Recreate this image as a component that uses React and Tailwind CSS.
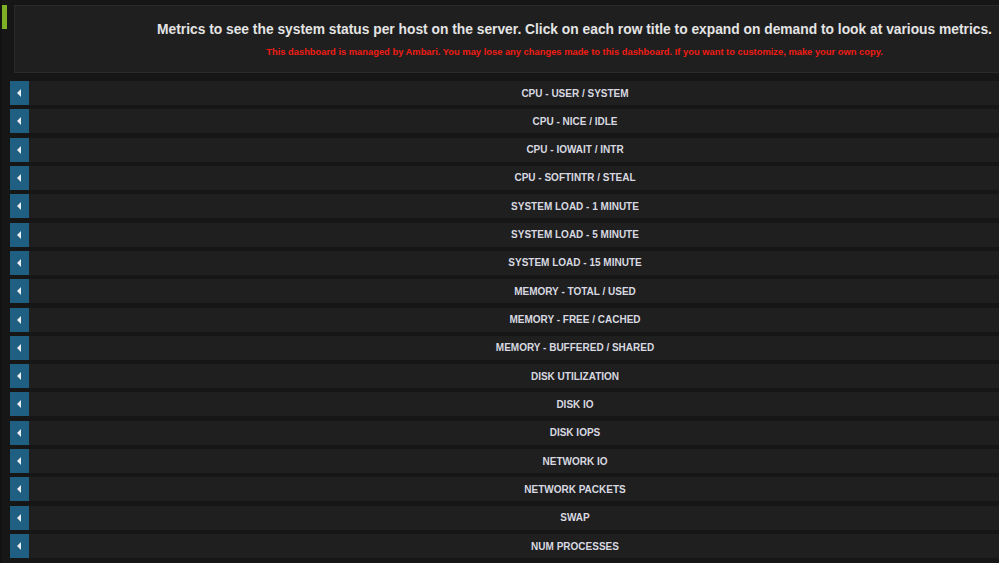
import React from 'react';

const rows = [
  'CPU - USER / SYSTEM',
  'CPU - NICE / IDLE',
  'CPU - IOWAIT / INTR',
  'CPU - SOFTINTR / STEAL',
  'SYSTEM LOAD - 1 MINUTE',
  'SYSTEM LOAD - 5 MINUTE',
  'SYSTEM LOAD - 15 MINUTE',
  'MEMORY - TOTAL / USED',
  'MEMORY - FREE / CACHED',
  'MEMORY - BUFFERED / SHARED',
  'DISK UTILIZATION',
  'DISK IO',
  'DISK IOPS',
  'NETWORK IO',
  'NETWORK PACKETS',
  'SWAP',
  'NUM PROCESSES',
];

function Caret() {
  return (
    <svg width="5" height="8" viewBox="0 0 5 8">
      <path d="M4 0 L4 8 L0 4 Z" fill="#e8eef2" />
    </svg>
  );
}

export default function App() {
  return (
    <div
      className="w-[999px] h-[563px] overflow-hidden bg-[#161616] flex"
      style={{ fontFamily: '"Liberation Sans", Arial, sans-serif' }}
    >
      {/* left gutter */}
      <div className="w-[2px] shrink-0 bg-[#121212]" />
      <div className="flex-1 flex flex-col min-w-0">
        <div className="flex">
          <div className="w-[5px] h-[24px] mt-[5px] bg-[#7eb026] shrink-0" />
          <div className="ml-[7px] mt-[5px] w-[1121px] h-[68px] shrink-0 bg-[#1f1f1f] border border-[#2a2a2a] flex flex-col items-center">
            <div className="mt-[15px] text-[13.8px] font-bold text-[#e4e4e4] leading-[18px] whitespace-nowrap">
              Metrics to see the system status per host on the server. Click on each row title to expand on demand to look at various metrics.
            </div>
            <div className="mt-[7px] text-[9.35px] font-bold text-[#f01c14] leading-[12px] whitespace-nowrap">
              This dashboard is managed by Ambari. You may lose any changes made to this dashboard. If you want to customize, make your own copy.
            </div>
          </div>
        </div>
        <div className="ml-[8px] mt-[8px] w-[1130px] flex flex-col gap-[4.32px]">
          {rows.map((r) => (
            <div key={r} className="relative h-[24px] bg-[#1f1f1f] flex items-center justify-center">
              <div className="absolute left-0 top-0 h-[24px] w-[19px] bg-[#1f5f82] flex items-center justify-center">
                <Caret />
              </div>
              <span className="text-[10px] font-bold text-[#d8d9e0] whitespace-nowrap">{r}</span>
            </div>
          ))}
        </div>
      </div>
    </div>
  );
}
